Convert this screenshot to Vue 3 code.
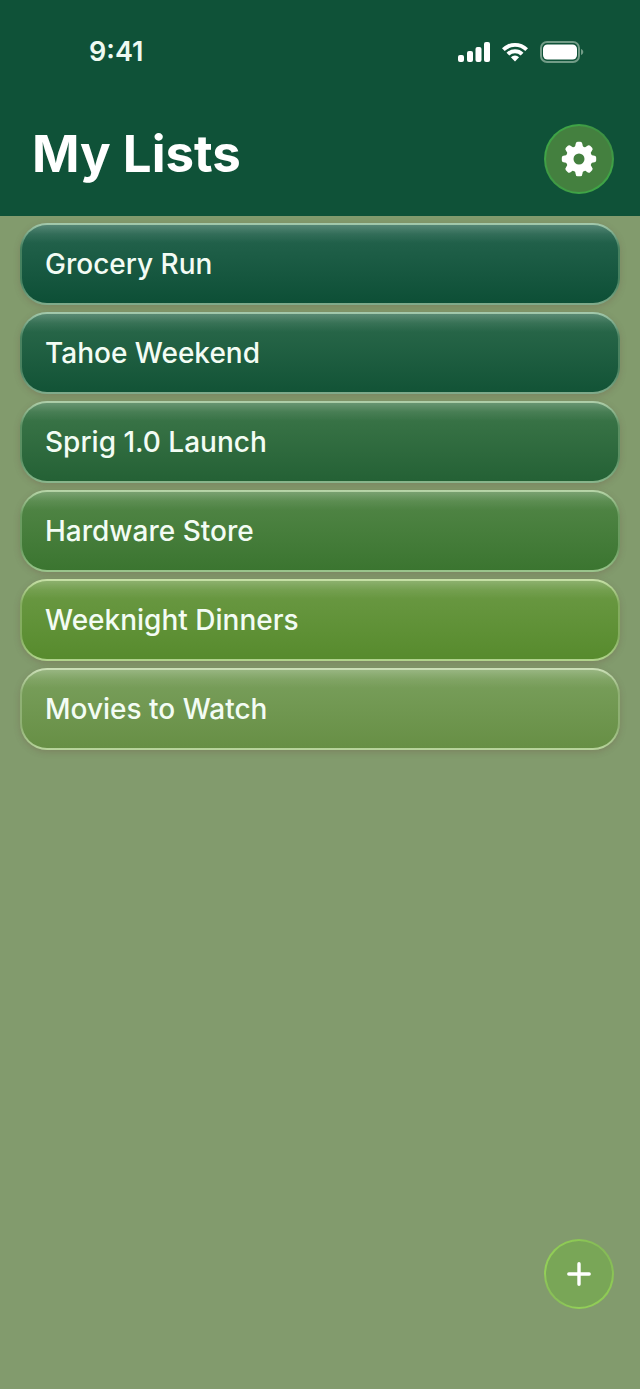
<template>
  <div class="app">
    <header class="header">
      <div class="status-bar">
        <span class="time">9:41</span>
        <div class="status-icons">
          <svg class="signal" viewBox="0 0 32 20" aria-hidden="true">
            <rect x="0" y="13" width="6" height="7" rx="2" />
            <rect x="9" y="9" width="6" height="11" rx="2" />
            <rect x="17.5" y="5" width="6" height="15" rx="2" />
            <rect x="26" y="0" width="6" height="20" rx="2" />
          </svg>
          <svg class="wifi" viewBox="0 0 28 20" aria-hidden="true">
            <path d="M1 6.2a18.6 18.6 0 0 1 26 0l-2.7 2.9a14.6 14.6 0 0 0-20.6 0z" />
            <path d="M5.5 10.7a12.2 12.2 0 0 1 17 0l-2.8 2.9a8.2 8.2 0 0 0-11.4 0z" />
            <path d="M9.9 15.2a5.9 5.9 0 0 1 8.2 0L14 19.5z" />
          </svg>
          <svg class="battery" viewBox="0 0 44 22" aria-hidden="true">
            <rect class="battery-case" x="1" y="1" width="38" height="20" rx="6" />
            <rect x="3" y="3.5" width="34" height="15" rx="4.5" />
            <path class="battery-tip" d="M41 8c3 1 3 5 0 6z" />
          </svg>
        </div>
      </div>
      <div class="title-bar">
        <h1>My Lists</h1>
        <button class="round-button settings" type="button" aria-label="Settings">
          <svg viewBox="-18 -18 36 36" aria-hidden="true">
            <circle r="9.3" fill="none" stroke="#fff" stroke-width="7.6" />
            <path
              v-for="n in 8"
              :key="n"
              :transform="`rotate(${n * 45})`"
              d="M-4.4-12Q-3.6-12.6-3.5-14.4Q-3.3-17.2-1.4-17.2H1.4Q3.3-17.2 3.5-14.4Q3.6-12.6 4.4-12L3-10H-3z"
            />
          </svg>
        </button>
      </div>
    </header>

    <main>
      <ul class="lists">
        <li v-for="list in lists" :key="list.name">
          <button type="button" class="list-card" :class="list.tone">{{ list.name }}</button>
        </li>
      </ul>
    </main>

    <footer class="footer">
      <button class="round-button add" type="button" aria-label="Add list">
        <svg viewBox="-18 -18 36 36" aria-hidden="true">
          <path d="M0-10.2V10.2M-10.2 0H10.2" stroke="#fff" stroke-width="3.4" stroke-linecap="round" />
        </svg>
      </button>
    </footer>
  </div>
</template>

<script setup>
  import { ref } from 'vue';

  const lists = ref([
    { name: 'Grocery Run', tone: 'pine' },
    { name: 'Tahoe Weekend', tone: 'forest' },
    { name: 'Sprig 1.0 Launch', tone: 'fern' },
    { name: 'Hardware Store', tone: 'leaf' },
    { name: 'Weeknight Dinners', tone: 'lime' },
    { name: 'Movies to Watch', tone: 'sage' },
  ]);
</script>

<style>
  body {
    margin: 0;
    background: #829b6d;
  }
</style>

<style scoped>
  .app {
    display: flex;
    flex-direction: column;
    box-sizing: border-box;
    min-height: 100vh;
    background: #829b6d;
    font-family: Inter, "Liberation Sans", sans-serif;
    color: #fff;
  }
  .header {
    background: #0f5238;
    padding-bottom: 22px;
  }
  .status-bar {
    display: flex;
    align-items: center;
    justify-content: space-between;
    height: 104px;
    padding: 0 56px 0 89px;
  }
  .time {
    font-size: 27px;
    font-weight: 600;
    line-height: 32px;
    color: #eefaf2;
  }
  .status-icons {
    display: flex;
    align-items: center;
    gap: 11px;
  }
  svg {
    display: block;
    fill: #fff;
  }
  .signal {
    width: 32px;
    height: 20px;
  }
  .wifi {
    width: 28px;
    height: 20px;
  }
  .battery {
    width: 44px;
    height: 22px;
  }
  .battery-case {
    fill: none;
    stroke: #729c87;
    stroke-width: 2;
  }
  .battery-tip {
    fill: #729c87;
  }
  .title-bar {
    display: flex;
    align-items: center;
    justify-content: space-between;
    padding: 20px 26px 0 32px;
  }
  h1 {
    margin: 0 0 10px;
    font-size: 51px;
    font-weight: 700;
    line-height: 60px;
  }
  .round-button {
    display: flex;
    align-items: center;
    justify-content: center;
    box-sizing: border-box;
    width: 70px;
    height: 70px;
    padding: 0;
    border: 2px solid transparent;
    border-radius: 50%;
    cursor: pointer;
  }
  .round-button svg {
    width: 36px;
    height: 36px;
  }
  .settings {
    background:
      linear-gradient(#44803f, #44803f) padding-box,
      linear-gradient(50deg, #3f8a40, #3fa446 25%, #3fa446 70%, #3c7c40) border-box;
  }
  .add {
    background:
      linear-gradient(#79a657, #79a657) padding-box,
      linear-gradient(50deg, #79a657, #93cf58 25%, #8dc954 70%, #7fac5b) border-box;
  }
  .lists {
    display: flex;
    flex-direction: column;
    gap: 7px;
    margin: 0;
    padding: 7px 20px;
    list-style: none;
  }
  .list-card {
    display: block;
    box-sizing: border-box;
    width: 100%;
    padding: 23px;
    border: 2px solid transparent;
    border-radius: 27px;
    background:
      linear-gradient(rgba(255, 255, 255, 0.22), rgba(255, 255, 255, 0.07) 9px, transparent 18px) padding-box,
      linear-gradient(var(--top), var(--bottom)) padding-box,
      linear-gradient(var(--edge-top), var(--edge-side) 30%, var(--edge-side) 70%, var(--edge-bottom)) border-box;
    box-shadow: 0 2px 6px rgba(110, 80, 70, 0.3);
    color: #f3fcf4;
    font-family: inherit;
    font-size: 28px;
    font-weight: 500;
    line-height: 32px;
    text-align: left;
    cursor: pointer;
  }
  .pine {
    --top: #26654f;
    --bottom: #0d4f36;
    --edge-top: #a5cbae;
    --edge-side: #45805f;
    --edge-bottom: #82ac8c;
  }
  .forest {
    --top: #2c6a4c;
    --bottom: #125336;
    --edge-top: #a5cbae;
    --edge-side: #4a8260;
    --edge-bottom: #82ac8c;
  }
  .fern {
    --top: #3d774a;
    --bottom: #246135;
    --edge-top: #b0d0ab;
    --edge-side: #5b8f62;
    --edge-bottom: #8ab78d;
  }
  .leaf {
    --top: #538748;
    --bottom: #3b7530;
    --edge-top: #b8d6a9;
    --edge-side: #6b9b60;
    --edge-bottom: #9bc68d;
  }
  .lime {
    --top: #6c9a45;
    --bottom: #578b2d;
    --edge-top: #c8e2a8;
    --edge-side: #84ac60;
    --edge-bottom: #b2d58d;
  }
  .sage {
    --top: #7aa05d;
    --bottom: #678f45;
    --edge-top: #cde1b9;
    --edge-side: #8fb074;
    --edge-bottom: #b9d59d;
  }
  .footer {
    display: flex;
    justify-content: flex-end;
    margin-top: auto;
    padding: 0 26px 80px;
  }
</style>
